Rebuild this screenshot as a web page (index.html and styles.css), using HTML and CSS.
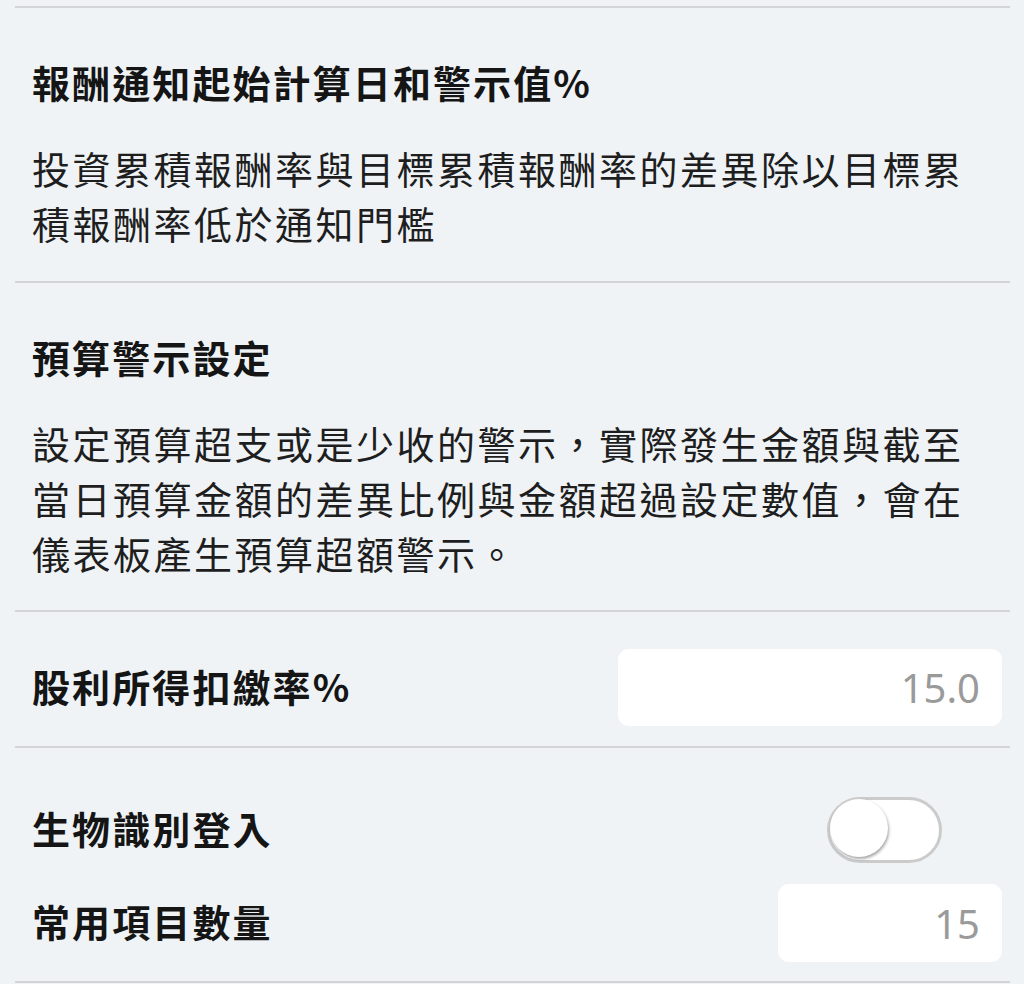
FILE: index.html
```html
<!DOCTYPE html>
<html lang="zh-Hant">
<head>
<meta charset="utf-8">
<link rel="stylesheet" href="styles.css">
</head>
<body>
<div class="page">
  <div class="divider"></div>
  <section class="block block-first">
    <h2 class="title">報酬通知起始計算日和警示值%</h2>
    <p class="desc">投資累積報酬率與目標累積報酬率的差異除以目標累積報酬率低於通知門檻</p>
  </section>
  <section class="block block-second">
    <h2 class="title">預算警示設定</h2>
    <p class="desc">設定預算超支或是少收的警示，實際發生金額與截至當日預算金額的差異比例與金額超過設定數值，會在儀表板產生預算超額警示。</p>
  </section>
  <section class="row-block">
    <div class="row">
      <span class="title">股利所得扣繳率%</span>
      <div class="field field-wide">15.0</div>
    </div>
  </section>
  <section class="row-block row-block-pair">
    <div class="row row-toggle">
      <span class="title">生物識別登入</span>
      <div class="toggle"><span class="knob"></span></div>
    </div>
    <div class="row row-count">
      <span class="title">常用項目數量</span>
      <div class="field field-narrow">15</div>
    </div>
  </section>
</div>
</body>
</html>
```

FILE: styles.css
```css
html, body {
  margin: 0;
  padding: 0;
  background: #eff3f6;
}

body {
  font-family: "Noto Sans CJK TC", "Noto Sans", sans-serif;
  color: #1a1a1a;
}

.page {
  padding: 6px 14px 0 15px;
}

.divider {
  height: 2px;
  background: #d3d4d6;
}

.block {
  border-bottom: 2px solid #d3d4d6;
  padding: 46px 0 31px 17px;
}

.block-second {
  padding-top: 46px;
  padding-bottom: 30px;
}

.title {
  margin: 0;
  font-size: 38px;
  line-height: 56px;
  font-weight: 700;
  letter-spacing: 2.1px;
  color: #151515;
}

.desc {
  margin: 30px 0 0;
  font-size: 38px;
  line-height: 55px;
  font-weight: 400;
  letter-spacing: 2.5px;
  color: #1e1e1e;
  width: 950px;
}

.row-block {
  border-bottom: 2px solid #d3d4d6;
  padding: 37px 8px 20px 17px;
}

.row {
  display: flex;
  align-items: center;
  justify-content: space-between;
}

.row .title {
  position: relative;
  top: -2px;
}

.field {
  background: #ffffff;
  border-radius: 11px;
  height: 77px;
  box-sizing: border-box;
  padding-right: 22px;
  display: flex;
  align-items: center;
  justify-content: flex-end;
  font-family: "Noto Sans", sans-serif;
  font-size: 40px;
  color: #9a9a9a;
}

.field-wide {
  width: 384px;
}

.field-narrow {
  width: 224px;
  height: 78px;
}

.row-block-pair {
  padding-top: 49px;
  padding-bottom: 19px;
}

.row-toggle {
  height: 66px;
}

.row-count {
  margin-top: 21px;
}

.toggle {
  position: relative;
  width: 115px;
  height: 66px;
  box-sizing: border-box;
  border: 3px solid #cbcbcb;
  border-radius: 33px;
  background: #ffffff;
  margin-right: 60px;
}

.knob {
  position: absolute;
  left: 0;
  top: -1px;
  width: 58px;
  height: 58px;
  border-radius: 50%;
  background: #ffffff;
  box-shadow: 1px 2px 3px rgba(0, 0, 0, 0.35);
}
```
